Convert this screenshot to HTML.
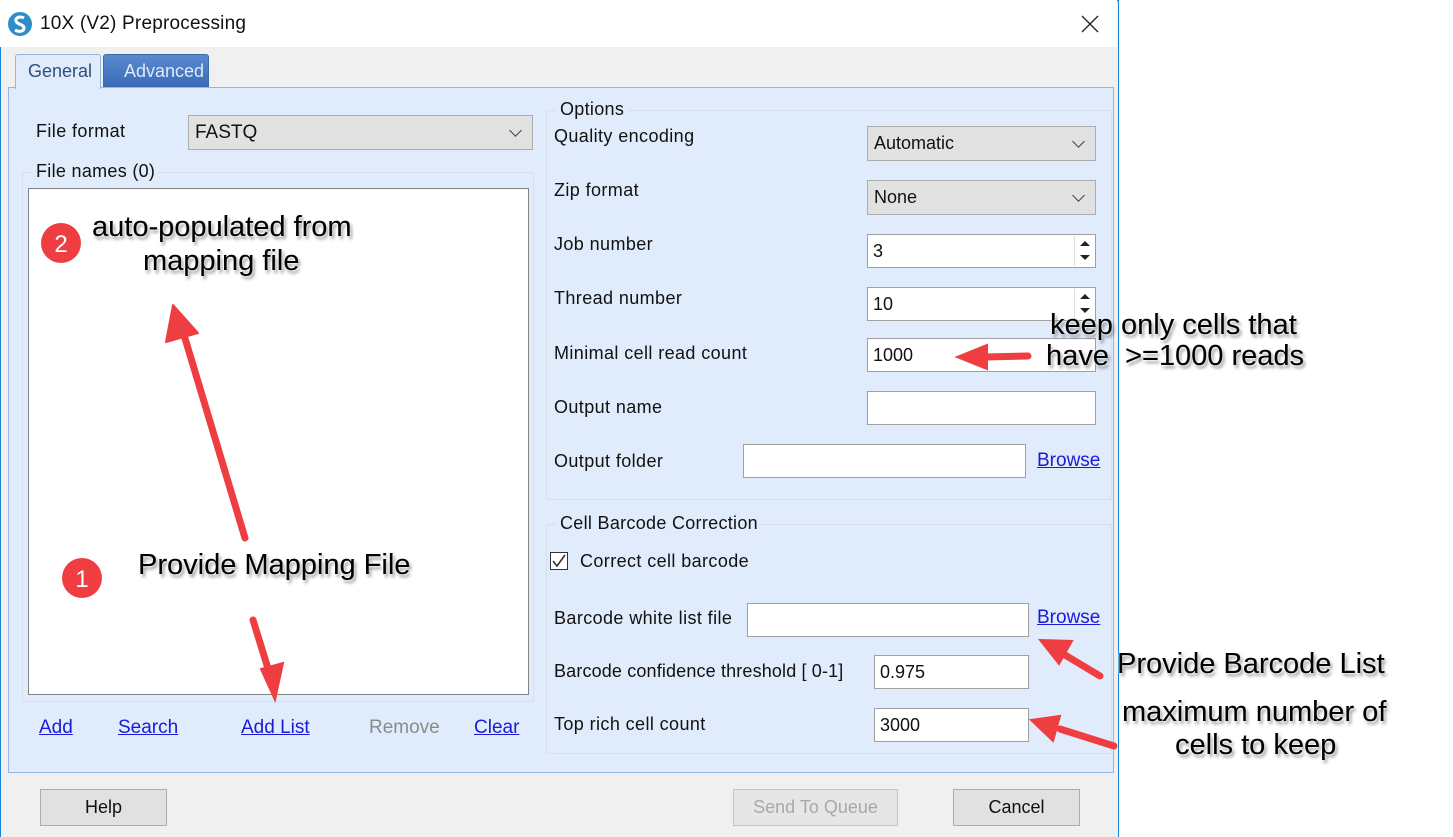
<!DOCTYPE html>
<html><head><meta charset="utf-8"><style>
*{margin:0;padding:0;box-sizing:border-box}
body{width:1453px;height:837px;background:#fff;position:relative;overflow:hidden;font-family:"Liberation Sans",sans-serif;font-size:18px;color:#111}
.a{position:absolute}
#win{left:0;top:0;width:1119px;height:837px;background:#f0f0f0;border-left:1px solid #1883d7;border-right:1px solid #1883d7;border-top:1px solid #1883d7}
#title{left:0;top:0;width:1117px;height:47px;background:#fff}
#panel{left:8px;top:87px;width:1106px;height:686px;background:#e0ecfb;border:1px solid #94b6e2}
.lbl{position:absolute;white-space:nowrap;letter-spacing:0.4px}
.combo{position:absolute;background:#e1e1e1;border:1px solid #adadad;height:35px;padding:6px 6px;font-size:18px}
.combo:after{content:"";position:absolute;right:12px;top:10px;width:8px;height:8px;border-right:1.5px solid #444;border-bottom:1.5px solid #444;transform:rotate(45deg)}
.tb{position:absolute;background:#fff;border:1px solid #a0a0a0;height:34px;padding:6px 5px}
.grp{position:absolute;border:1px solid #d6dfea;border-radius:2px}
.grp>span{position:absolute;top:-12px;left:10px;background:#e0ecfb;padding:0 3px;letter-spacing:0.3px}
.lnk{position:absolute;color:#1a1ad8;text-decoration:underline;font-size:19px}
.btn{position:absolute;background:#e1e1e1;border:1px solid #adadad;height:37px;text-align:center;line-height:34px;font-size:18px}
.ann{position:absolute;font-size:29px;color:#000;white-space:nowrap;text-shadow:0 0 2px #fff,0 0 2px #fff,0.4px 0 0 #000,2px 3px 3px rgba(0,0,0,.45)}
.spin{position:absolute;right:1px;top:1px;width:20px;height:30px;border-left:1px solid #ddd}
.spin i{position:absolute;left:5px;width:0;height:0;border-left:5px solid transparent;border-right:5px solid transparent}
</style></head><body>
<div id="win" class="a"></div>
<div id="title" class="a"></div>
<svg class="a" style="left:7px;top:11px" width="26" height="26" viewBox="0 0 26 26"><circle cx="13" cy="13" r="12" fill="#2d8cc9"/><path d="M17 7c-3-2-9-1-8 3s8 3 8 7-6 4-9 2" stroke="#fff" stroke-width="3" fill="none"/></svg>
<div class="lbl" style="left:40px;top:13px;font-size:19px;letter-spacing:0.2px">10X (V2) Preprocessing</div>
<svg class="a" style="left:1081px;top:15px" width="18" height="18"><path d="M1 1L17 17M17 1L1 17" stroke="#222" stroke-width="1.3"/></svg>
<div id="panel" class="a"></div>
<div class="a" style="left:15px;top:54px;width:86px;height:35px;background:#e0ecfb;border:1px solid #94b6e2;border-bottom:none;border-radius:3px 3px 0 0"></div>
<div class="lbl" style="left:28px;top:61px;color:#2c4f7d;letter-spacing:0">General</div>
<div class="a" style="left:103px;top:54px;width:106px;height:33px;background:linear-gradient(#5a8bd0,#3a6cb8);border:1px solid #3f6bae;border-radius:3px 3px 0 0"></div>
<div class="lbl" style="left:124px;top:61px;color:#dfe9f7;letter-spacing:0">Advanced</div>

<div class="lbl" style="left:36px;top:121px">File format</div>
<div class="combo" style="left:188px;top:115px;width:345px;font-size:19px">FASTQ</div>
<div class="grp" style="left:22px;top:172px;width:512px;height:530px"><span>File names (0)</span></div>
<div class="a" style="left:28px;top:188px;width:501px;height:507px;background:#fff;border:1px solid #828282"></div>
<div class="lnk" style="left:39px;top:717px">Add</div>
<div class="lnk" style="left:118px;top:717px">Search</div>
<div class="lnk" style="left:241px;top:717px">Add List</div>
<div class="lbl" style="left:369px;top:717px;font-size:19px;color:#8a8a8a;letter-spacing:0">Remove</div>
<div class="lnk" style="left:474px;top:717px">Clear</div>

<div class="grp" style="left:546px;top:110px;width:566px;height:390px"><span>Options</span></div>
<div class="lbl" style="left:554px;top:126px">Quality encoding</div>
<div class="combo" style="left:867px;top:126px;width:229px">Automatic</div>
<div class="lbl" style="left:554px;top:180px">Zip format</div>
<div class="combo" style="left:867px;top:180px;width:229px">None</div>
<div class="lbl" style="left:554px;top:234px">Job number</div>
<div class="tb" style="left:867px;top:234px;width:229px">3<div class="spin"><i style="top:5px;border-bottom:5px solid #222"></i><i style="top:19px;border-top:5px solid #222"></i></div></div>
<div class="lbl" style="left:554px;top:288px">Thread number</div>
<div class="tb" style="left:867px;top:287px;width:229px">10<div class="spin"><i style="top:5px;border-bottom:5px solid #222"></i><i style="top:19px;border-top:5px solid #222"></i></div></div>
<div class="lbl" style="left:554px;top:343px">Minimal cell read count</div>
<div class="tb" style="left:867px;top:338px;width:229px">1000</div>
<div class="lbl" style="left:554px;top:397px">Output name</div>
<div class="tb" style="left:867px;top:391px;width:229px"></div>
<div class="lbl" style="left:554px;top:451px">Output folder</div>
<div class="tb" style="left:743px;top:444px;width:283px"></div>
<div class="lnk" style="left:1037px;top:450px">Browse</div>

<div class="grp" style="left:546px;top:524px;width:566px;height:230px"><span>Cell Barcode Correction</span></div>
<div class="a" style="left:550px;top:552px;width:18px;height:18px;border:1px solid #333;background:#fff"></div>
<svg class="a" style="left:551px;top:553px" width="16" height="16"><path d="M2 8l4 5 8-11" stroke="#333" stroke-width="1.6" fill="none"/></svg>
<div class="lbl" style="left:580px;top:551px">Correct cell barcode</div>
<div class="lbl" style="left:554px;top:608px">Barcode white list file</div>
<div class="tb" style="left:747px;top:603px;width:282px"></div>
<div class="lnk" style="left:1037px;top:607px">Browse</div>
<div class="lbl" style="left:554px;top:661px;letter-spacing:0.15px">Barcode confidence threshold [ 0-1]</div>
<div class="tb" style="left:874px;top:655px;width:155px">0.975</div>
<div class="lbl" style="left:554px;top:714px">Top rich cell count</div>
<div class="tb" style="left:874px;top:708px;width:155px">3000</div>

<div class="btn" style="left:40px;top:789px;width:127px">Help</div>
<div class="btn" style="left:733px;top:789px;width:165px;color:#a8a8a8;background:#e6e6e6;border-color:#c4c4c4">Send To Queue</div>
<div class="btn" style="left:953px;top:789px;width:127px">Cancel</div>

<svg class="a" style="left:0;top:0" width="1453" height="837">
<g fill="#ef3e42" stroke="#ef3e42" stroke-linecap="round">
<line x1="245" y1="538" x2="184" y2="335" stroke-width="7"/><polygon points="173,305 166,342 198,333" stroke-width="2" stroke-linejoin="round"/>
<line x1="253" y1="620" x2="270" y2="675" stroke-width="7"/><polygon points="275,700 261,669 283,663" stroke-width="2"/>
<line x1="1028" y1="356" x2="985" y2="357" stroke-width="7"/><polygon points="957,357 987,345 987,369" stroke-width="2"/>
<line x1="1100" y1="676" x2="1065" y2="655" stroke-width="7"/><polygon points="1040,640 1072,641 1059,664" stroke-width="2"/>
<line x1="1114" y1="746" x2="1060" y2="729" stroke-width="7"/><polygon points="1031,720 1060,716 1053,741" stroke-width="2"/>
<circle cx="61" cy="243" r="20" stroke="none"/><circle cx="82" cy="578" r="20" stroke="none"/>
</g>
<text x="61" y="252" fill="#fff" font-size="24" text-anchor="middle" font-family="Liberation Sans">2</text>
<text x="82" y="587" fill="#fff" font-size="24" text-anchor="middle" font-family="Liberation Sans">1</text>
</svg>
<div class="ann" style="left:92px;top:211px">auto-populated from</div>
<div class="ann" style="left:143px;top:245px">mapping file</div>
<div class="ann" style="left:138px;top:549px">Provide Mapping File</div>
<div class="ann" style="left:1050px;top:309px">keep only cells that</div>
<div class="ann" style="left:1046px;top:340px">have&nbsp; &gt;=1000 reads</div>
<div class="ann" style="left:1117px;top:648px">Provide Barcode List</div>
<div class="ann" style="left:1122px;top:696px">maximum number of</div>
<div class="ann" style="left:1175px;top:729px">cells to keep</div>
</body></html>
